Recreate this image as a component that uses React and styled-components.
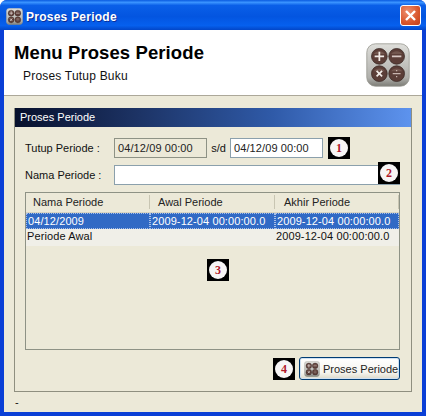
import React from "react";
import styled, { createGlobalStyle } from "styled-components";

const Global = createGlobalStyle`
  html, body { margin: 0; padding: 0; background: #fff; }
  #root { width: 426px; height: 416px; overflow: hidden; }
  * { box-sizing: border-box; }
`;

const Frame = styled.div`
  width: 426px; height: 416px; display: flex; flex-direction: column;
  background: #0a3fd6; border-radius: 7px 7px 0 0; overflow: hidden;
  font-family: "Liberation Sans", Arial, sans-serif; font-size: 11px; color: #111;
`;
const TitleBar = styled.div`
  height: 30px; flex: none; display: flex; align-items: center; padding: 3px 5px 0 6px; gap: 3px;
  background: linear-gradient(180deg, #0a5be0 0%, #3a93ff 8%, #0a5fe8 18%, #0355e0 55%, #0660ee 85%, #0246c8 100%);
`;
const TitleText = styled.div`
  flex: 1; color: #fff; font: bold 12px "Liberation Sans", Arial, sans-serif; letter-spacing: .25px;
  text-shadow: 1px 1px 0 #0a2f9a;
`;
const CloseBtn = styled.div`
  width: 21px; height: 21px; margin-top: -3px; border: 1px solid #fff; border-radius: 3px;
  background: radial-gradient(circle at 35% 30%, #ee9070, #d8562c 60%, #c23f1a);
  display: flex; align-items: center; justify-content: center;
`;
const Body = styled.div`
  flex: 1; margin: 0 4px 4px 4px; display: flex; flex-direction: column; background: #ece9d8; min-height: 0;
`;
const Header = styled.div`
  height: 66px; flex: none; background: #fff; border-bottom: 1px solid #aca899;
  display: flex; justify-content: space-between; padding: 13px 12px 0 10px;
`;
const HeadText = styled.div` display: flex; flex-direction: column; `;
const HeadTitle = styled.div`
  font: bold 18.5px "Liberation Sans", Arial, sans-serif; color: #000; line-height: 20px; letter-spacing: .1px;
`;
const HeadSub = styled.div`
  margin: 5px 0 0 9px; font-size: 12px; line-height: 16px; color: #111; letter-spacing: .2px;
`;
const Content = styled.div` flex: 1; padding: 12px 10px 0 10px; display: flex; flex-direction: column; min-height: 0; `;
const Panel = styled.div`
  height: 284px; flex: none; border: 1px solid #8f8f80; border-top: 0; display: flex; flex-direction: column;
`;
const PanelTitle = styled.div`
  height: 19px; flex: none; color: #fff; padding: 0 0 0 5px; line-height: 18px;
  background: linear-gradient(90deg, #07102c 0%, #1c3263 30%, #2f5aa8 65%, #5d93ee 100%);
`;
const PanelBody = styled.div` flex: 1; padding: 11px 11px 0 10px; display: flex; flex-direction: column; `;
const Row = styled.div` display: flex; align-items: center; height: 20px; position: relative; `;
const NameRow = styled(Row)` margin-top: 7px; `;
const Label = styled.div` width: 89px; flex: none; `;
const Field = styled.div`
  width: ${p => p.$w}px; height: 20px; flex: ${p => p.$grow ? 1 : "none"};
  border: 1px solid ${p => p.$off ? "#8e9285" : "#8ba0ac"}; background: ${p => p.$off ? "#ece9d8" : "#fff"};
  padding: 0 0 0 3px; line-height: 18px; color: #222; letter-spacing: .1px;
`;
const Sd = styled.div` width: 23px; text-align: center; flex: none; `;
const Badge = styled.div`
  width: 22px; height: 22px; background: #000; flex: none; display: flex; align-items: center; justify-content: center;
  margin-left: ${p => p.$ml || 0}px;
`;
const BadgeDot = styled.div`
  width: 18px; height: 18px; border-radius: 50%; background: #f7f5f5; color: #b0182a;
  font: bold 12px "Liberation Serif", serif; line-height: 18px; text-align: center;
`;
const OverBadge = styled(Badge)` position: absolute; right: 0; top: -3px; `;
const Table = styled.div`
  height: 158px; margin-top: 7px; border: 1px solid #8e9285; display: flex; flex-direction: column; position: relative; flex: none;
`;
const HeadRow = styled.div`
  height: 20px; flex: none; display: grid; grid-template-columns: 124px 125px 1fr; background: #ece9d8;
  border-bottom: 1px solid #d8d4c2;
`;
const HeadCell = styled.div`
  padding-left: ${p => p.$pad}px; color: #222;
  border-right: 1px solid #c8c5b2; margin: 2px 0 3px; line-height: 14px;
`;
const DataRow = styled.div`
  height: ${p => p.$h}px; flex: none; display: grid; grid-template-columns: 124px 125px 1fr;
  background: ${p => p.$sel ? "#316ac5" : "#f0efe8"}; color: ${p => p.$sel ? "#fff" : "#111"};
`;
const Cell = styled.div`
  padding-left: 1px; line-height: ${p => p.$lh}px; letter-spacing: .1px; white-space: nowrap; overflow: hidden;
  ${p => p.$sel && "border: 1px dotted #a9c0e6;"}
`;
const TableCenter = styled(Badge)` position: absolute; left: 181px; top: 66px; `;
const Actions = styled.div` display: flex; justify-content: flex-end; align-items: center; gap: 4px; margin-top: 7px; `;
const Btn = styled.div`
  width: 101px; height: 23px; border: 1px solid #003c74; border-radius: 3px;
  background: linear-gradient(180deg, #fff, #f5f4ee 70%, #dcd8c8);
  box-shadow: inset 0 0 0 1px #cfe0f2;
  display: flex; align-items: center; padding-left: 4px; gap: 3px; color: #222; white-space: nowrap;
`;
const Status = styled.div` height: 21px; flex: none; padding: 4px 0 0 1px; font-size: 11px; line-height: 13px; `;

function CalcIcon({ size, id }) {
  const dot = [[17, 17, "+"], [39, 17, "-"], [17, 39, "x"], [39, 39, "/"]];
  return (
    <svg width={size} height={size} viewBox="0 0 56 56" style={{ flex: "none", display: "block" }}>
      <defs>
        <linearGradient id={id} x1="0" y1="0" x2="0" y2="1">
          <stop offset="0" stopColor="#dededa" /><stop offset=".8" stopColor="#b0b0ac" /><stop offset="1" stopColor="#7c7c76" />
        </linearGradient>
      </defs>
      <rect x="1" y="1" width="54" height="54" rx="11" fill={`url(#${id})`} stroke="#97978f" />
      {dot.map(([x, y, k]) => (
        <g key={k}>
          <circle cx={x} cy={y} r="10" fill="#5b3e38" stroke="#3b2a26" />
          <path d={`M${x - 7} ${y - 3}a8 7 0 0 1 14 0z`} fill="#73574f" />
          {k === "+" && <path d={`M${x - 6} ${y}h12M${x} ${y - 6}v12`} stroke="#f2ece8" strokeWidth="2.2" />}
          {k === "-" && <path d={`M${x - 6} ${y}h12`} stroke="#d8c8c4" strokeWidth="2.2" />}
          {k === "x" && <path d={`M${x - 3.5} ${y - 3.5}l7 7M${x + 3.5} ${y - 3.5}l-7 7`} stroke="#f2ece8" strokeWidth="2.2" />}
          {k === "/" && <path d={`M${x - 5} ${y}h10M${x} ${y - 4.5}v1.5M${x} ${y + 3}v1.5`} stroke="#c8b4ae" strokeWidth="1.6" />}
        </g>
      ))}
    </svg>
  );
}

const Mark = ({ n }) => <BadgeDot>{n}</BadgeDot>;

export default function App() {
  return (
    <Frame>
      <Global />
      <TitleBar>
        <CalcIcon size={17} id="c1" />
        <TitleText>Proses Periode</TitleText>
        <CloseBtn>
          <svg width="13" height="13" viewBox="0 0 13 13"><path d="M2 2l9 9M11 2l-9 9" stroke="#fff" strokeWidth="2.4" /></svg>
        </CloseBtn>
      </TitleBar>
      <Body>
        <Header>
          <HeadText>
            <HeadTitle>Menu Proses Periode</HeadTitle>
            <HeadSub>Proses Tutup Buku</HeadSub>
          </HeadText>
          <CalcIcon size={44} id="c2" />
        </Header>
        <Content>
          <Panel>
            <PanelTitle>Proses Periode</PanelTitle>
            <PanelBody>
              <Row>
                <Label>Tutup Periode :</Label>
                <Field $off $w={93}>04/12/09 00:00</Field>
                <Sd>s/d</Sd>
                <Field $w={93}>04/12/09 00:00</Field>
                <Badge $ml={5}><Mark n="1" /></Badge>
              </Row>
              <NameRow>
                <Label>Nama Periode :</Label>
                <Field $grow />
                <OverBadge><Mark n="2" /></OverBadge>
              </NameRow>
              <Table>
                <HeadRow>
                  <HeadCell $pad={7}>Nama Periode</HeadCell>
                  <HeadCell $pad={8}>Awal Periode</HeadCell>
                  <HeadCell $pad={9}>Akhir Periode</HeadCell>
                </HeadRow>
                <DataRow $sel $h={16}>
                  <Cell $sel $lh={14}>04/12/2009</Cell>
                  <Cell $sel $lh={14}>2009-12-04 00:00:00.0</Cell>
                  <Cell $sel $lh={14}>2009-12-04 00:00:00.0</Cell>
                </DataRow>
                <DataRow $h={17}>
                  <Cell $lh={15}>Periode Awal</Cell>
                  <Cell $lh={15} />
                  <Cell $lh={15}>2009-12-04 00:00:00.0</Cell>
                </DataRow>
                <TableCenter><Mark n="3" /></TableCenter>
              </Table>
              <Actions>
                <Badge><Mark n="4" /></Badge>
                <Btn><CalcIcon size={16} id="c3" />Proses Periode</Btn>
              </Actions>
            </PanelBody>
          </Panel>
          <Status>-</Status>
        </Content>
      </Body>
    </Frame>
  );
}
